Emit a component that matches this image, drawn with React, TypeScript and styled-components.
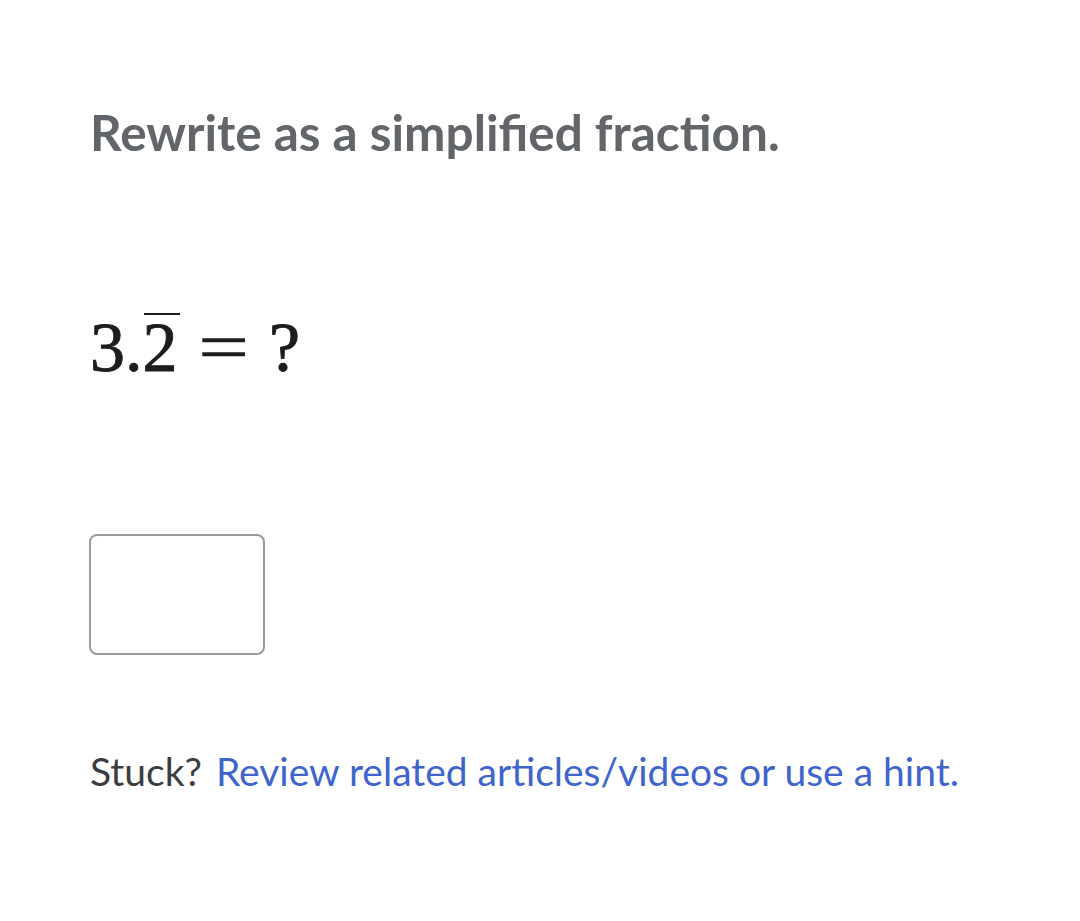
import React from "react";
import styled, { createGlobalStyle } from "styled-components";

const Global = createGlobalStyle`
  html, body { margin: 0; padding: 0; background: #ffffff; }
  body { font-family: Lato, "Noto Sans", sans-serif; }
`;

const Page = styled.main`
  display: flex;
  flex-direction: column;
  align-items: flex-start;
  padding: 102px 0 0 90px;
  width: 1080px;
  height: 921px;
  box-sizing: border-box;
`;

const Heading = styled.h1`
  margin: 0;
  font-family: Lato, sans-serif;
  font-weight: 700;
  font-size: 49.5px;
  line-height: 60px;
  color: #626569;
  letter-spacing: 0;
`;

const MathLine = styled.div`
  margin-top: 144px;
  display: flex;
  align-items: baseline;
  font-family: "Liberation Serif", "Times New Roman", serif;
  font-size: 70px;
  line-height: 84px;
  color: #1d1d1f;
  -webkit-text-stroke: 0.9px #1d1d1f;
`;

const Repeat = styled.span`
  position: relative;
  display: inline-block;
  &::before {
    content: "";
    position: absolute;
    left: 1px;
    right: -2px;
    top: 7px;
    height: 2px;
    background: #1d1d1f;
  }
`;

const Rel = styled.span`
  display: inline-block;
  margin: 0 26px 0 26px;
  transform: scaleX(1.3);
  -webkit-text-stroke: 0.3px #1d1d1f;
`;

const AnswerBox = styled.div`
  margin-top: 144px;
  margin-left: -1px;
  width: 176px;
  height: 121px;
  box-sizing: border-box;
  border: 2px solid #9b9b9b;
  border-radius: 8px;
  background: #fff;
`;

const Hint = styled.p`
  margin: 92px 0 0;
  font-family: Lato, sans-serif;
  font-size: 39px;
  line-height: 48px;
  color: #3b3d40;
`;

const Link = styled.a`
  color: #3f65cc;
  text-decoration: none;
  margin-left: 14px;
`;

export default function App() {
  return (
    <>
      <Global />
      <Page>
        <Heading>Rewrite as a simplified fraction.</Heading>
        <MathLine>
          <span>3.</span>
          <Repeat>2</Repeat>
          <Rel>=</Rel>
          <span>?</span>
        </MathLine>
        <AnswerBox />
        <Hint>
          Stuck?<Link href="#">Review related articles/videos or use a hint.</Link>
        </Hint>
      </Page>
    </>
  );
}
